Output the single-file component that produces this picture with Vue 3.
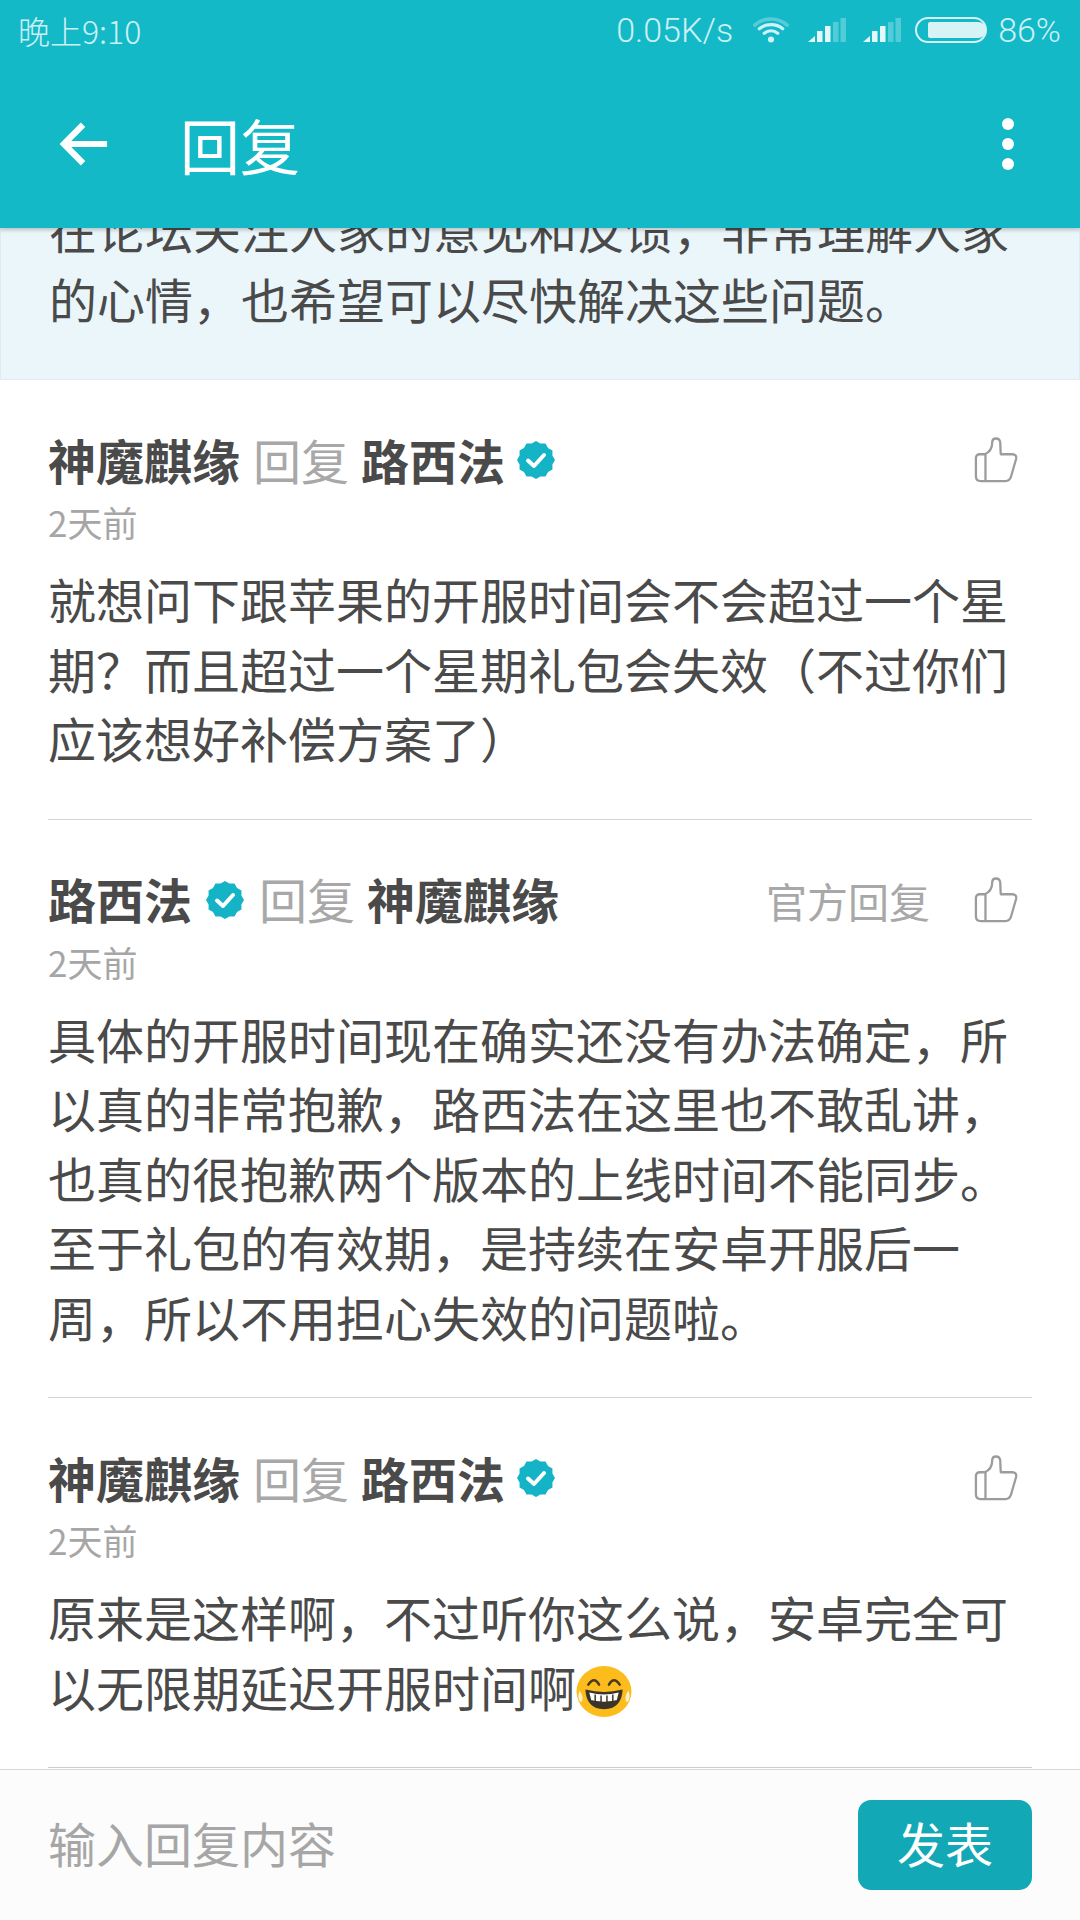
<script setup>
const comments = [
  {
    from: '神魔麒缘', fromBadge: false, to: '路西法', toBadge: true, official: false, time: '2天前',
    lines: ['就想问下跟苹果的开服时间会不会超过一个星', '期？而且超过一个星期礼包会失效（不过你们', '应该想好补偿方案了）']
  },
  {
    from: '路西法', fromBadge: true, to: '神魔麒缘', toBadge: false, official: true, time: '2天前',
    lines: ['具体的开服时间现在确实还没有办法确定，所', '以真的非常抱歉，路西法在这里也不敢乱讲，', '也真的很抱歉两个版本的上线时间不能同步。', '至于礼包的有效期，是持续在安卓开服后一', '周，所以不用担心失效的问题啦。']
  },
  {
    from: '神魔麒缘', fromBadge: false, to: '路西法', toBadge: true, official: false, time: '2天前',
    lines: ['原来是这样啊，不过听你这么说，安卓完全可', '以无限期延迟开服时间啊'], emoji: true
  }
]

const badgePoints = (() => {
  const pts = []
  for (let i = 0; i < 24; i++) {
    const r = i % 2 ? 17 : 19
    const a = (Math.PI * i) / 12 - Math.PI / 2
    pts.push(`${(19 + r * Math.cos(a)).toFixed(2)},${(19 + r * Math.sin(a)).toFixed(2)}`)
  }
  return pts.join(' ')
})()
</script>

<template>
  <div class="screen" lang="zh-CN">
    <header class="top">
      <div class="status">
        <span class="clock">晚上9:10</span>
        <div class="status-right">
          <span class="speed">0.05K/s</span>
          <svg class="wifi" width="36" height="29" viewBox="0 0 40 30" fill="none" stroke="#d0f1f5" stroke-linecap="round">
            <path d="M2 9 C12 0 28 0 38 9" stroke-width="4" opacity=".35" />
            <path d="M7 13 C14 7 26 7 33 13" stroke-width="3.6" />
            <path d="M12.5 18 C17 14.5 23 14.5 27.5 18" stroke-width="3.6" />
            <circle cx="20" cy="25" r="3.4" fill="#d0f1f5" stroke="none" />
          </svg>
          <svg v-for="n in 2" :key="n" class="signal" width="38" height="26" viewBox="0 0 38 26">
            <path d="M0 25 L7 25 L7 19 Z" fill="#e4f8fa" />
            <rect x="9" y="14" width="5.5" height="11" fill="#e4f8fa" />
            <rect x="17" y="9" width="5.5" height="16" fill="#e4f8fa" />
            <rect x="25" y="5" width="5.5" height="20" fill="#e4f8fa" opacity=".3" />
            <rect x="32.500" y="1" width="5.5" height="24" fill="#e4f8fa" opacity=".3" />
          </svg>
          <div class="battery"><div class="battery-fill"></div></div>
          <span class="percent">86%</span>
        </div>
      </div>
      <div class="bar">
        <svg class="back" width="48" height="46" viewBox="0 0 50 46" fill="none" stroke="#fff" stroke-width="6.500">
          <path d="M24 3 L4 23 L24 43" />
          <path d="M4 23 H49" />
        </svg>
        <span class="title">回复</span>
        <div class="dots"><i></i><i></i><i></i></div>
      </div>
    </header>

    <main class="list">
      <section class="notice">
        <p>在论坛关注人家的意见和反馈，非常理解人家</p>
        <p>的心情，也希望可以尽快解决这些问题。</p>
      </section>

      <article v-for="(c, i) in comments" :key="i" class="comment">
        <div class="head">
          <b class="name">{{ c.from }}</b>
          <svg v-if="c.fromBadge" class="badge" width="38" height="38" viewBox="0 0 38 38">
            <polygon :points="badgePoints" fill="#14b4c6" />
            <path d="M11 19.500 L17 25 L27 14" fill="none" stroke="#fff" stroke-width="4" stroke-linecap="round" stroke-linejoin="round" />
          </svg>
          <span class="verb">回复</span>
          <b class="name">{{ c.to }}</b>
          <svg v-if="c.toBadge" class="badge" width="38" height="38" viewBox="0 0 38 38">
            <polygon :points="badgePoints" fill="#14b4c6" />
            <path d="M11 19.500 L17 25 L27 14" fill="none" stroke="#fff" stroke-width="4" stroke-linecap="round" stroke-linejoin="round" />
          </svg>
          <span class="spacer"></span>
          <span v-if="c.official" class="official">官方回复</span>
          <svg class="thumb" width="44" height="46" viewBox="0 0 46 48" fill="none" stroke="#9c9c9c" stroke-width="2.400" stroke-linejoin="round" stroke-linecap="round">
            <path d="M11 18 H6 Q2 18 2 22 V41 Q2 46 7 46 H33 Q37 46 38.500 42 L44 23 Q45 18 40 18 H28 Q27.500 10 27.500 6 Q27 1.500 23 1.500 Q19 1.500 19 6 Q19 15 11 18 Z" />
            <path d="M12 18 V46" />
          </svg>
        </div>
        <div class="time">{{ c.time }}</div>
        <div class="body">
          <p v-for="(line, j) in c.lines" :key="j" class="line">{{ line }}<svg v-if="c.emoji && j === c.lines.length - 1" class="emoji" width="56" height="51" viewBox="0 0 56 52">
              <ellipse cx="28" cy="26" rx="28" ry="26" fill="#fcbc1c" />
              <path d="M12 19 Q18 10 23 19 M33 19 Q38 10 44 19" fill="none" stroke="#4a3a20" stroke-width="2.500" stroke-linecap="round" />
              <path d="M9 24 Q28 29 47 24 Q46 44 28 44 Q10 44 9 24 Z" fill="#3c3428" />
              <path d="M13 27 Q28 31 43 27 L41 35 Q28 38 15 35 Z" fill="#fff" />
              <path d="M19 29 V40 M25 30 V42 M31 30 V42 M37 29 V40 M15 36 Q28 39 41 36" stroke="#3c3428" stroke-width="1.500" fill="none" />
              <path d="M3 25 Q8 32 5 37 Q0 35 3 25 Z M53 25 Q48 32 51 37 Q56 35 53 25 Z" fill="#fdf3d0" />
            </svg></p>
        </div>
      </article>
    </main>

    <footer class="composer">
      <span class="placeholder">输入回复内容</span>
      <button class="send" type="button">发表</button>
    </footer>
  </div>
</template>

<style>
html, body { margin: 0; background: #fff; }
</style>

<style scoped>
.screen {
  width: 1080px;
  height: 1920px;
  display: flex;
  flex-direction: column;
  overflow: hidden;
  background: #fff;
  color: #4a4a4a;
  font-family: "Noto Sans CJK SC", "Noto Sans", sans-serif;
}
p { margin: 0; }

.top {
  flex: none;
  height: 228px;
  background: #14b9c8;
  box-shadow: 0 2px 4px rgba(0, 0, 0, .22);
  position: relative;
  z-index: 2;
}
.status {
  height: 60px;
  padding: 0 17px 0 18px;
  display: flex;
  align-items: center;
  justify-content: space-between;
  color: #cdf0f4;
  font-family: Roboto, "Noto Sans CJK SC", sans-serif;
  font-size: 34px;
  font-weight: 300;
}
.clock { font-family: "Noto Sans CJK SC", Roboto, sans-serif; font-weight: 300; font-size: 32px; }
.status-right { display: flex; align-items: center; }
.speed { margin-right: 20px; }
.wifi { margin-right: 19px; }
.signal { margin-right: 17px; }
.signal:last-of-type { margin-right: 14px; }
.battery {
  width: 72px;
  height: 26px;
  box-sizing: border-box;
  border: 2px solid #d6f3f6;
  border-radius: 13px;
  padding: 3px;
  margin-right: 11px;
  display: flex;
}
.battery-fill {
  flex: none;
  width: 58px;
  margin-left: 8px;
  background: #d6f3f6;
  border-radius: 2px 8px 8px 2px;
}
.percent { margin-right: 2px; }
.bar {
  height: 168px;
  padding: 0 66px 0 60px;
  box-sizing: border-box;
  display: flex;
  align-items: center;
  color: #fff;
}
.back { flex: none; }
.title { margin-left: 72px; font-size: 60px; line-height: 80px; font-weight: 400; }
.dots {
  margin-left: auto;
  display: flex;
  flex-direction: column;
  gap: 8px;
}
.dots i { display: block; width: 12px; height: 12px; border-radius: 50%; background: #fff; }

.list { flex: 1; min-height: 0; overflow: hidden; }
.notice {
  height: 152px;
  box-sizing: border-box;
  padding: 0 48px 46px;
  display: flex;
  flex-direction: column;
  justify-content: flex-end;
  background: #eaf6fa;
  border: 1px solid #dcecf0;
  border-top: 0;
  font-size: 48px;
  line-height: 69.500px;
  white-space: nowrap;
}
.comment {
  margin: 0 48px;
  padding: 50px 0 46px;
  border-bottom: 1px solid #d4d4d4;
}
.comment:last-child { border-bottom: 1px solid #ccc; }
.head { display: flex; align-items: center; height: 60px; font-size: 48px; line-height: 60px; white-space: nowrap; }
.name { font-weight: 700; color: #4a4a4a; padding-bottom: 3px; }
.verb { color: #a8a8a8; margin: 0 12px 0 13px; padding-bottom: 3px; }
.badge { flex: none; margin-left: 14px; }
.head .badge + .verb { margin-left: 15px; }
.head .verb + .name + .badge { margin-left: 12px; }
.spacer { flex: 1; }
.official { font-size: 41px; color: #a8a8a8; margin-right: 44px; }
.thumb { flex: none; margin-right: 14px; }
.time { margin-top: 10px; font-size: 35px; line-height: 44px; color: #a6a6a6; }
.body { margin-top: 20px; font-size: 48px; line-height: 69.500px; white-space: nowrap; }
.line { height: 69.500px; }
.emoji { vertical-align: -10px; }

.composer {
  flex: none;
  height: 151px;
  box-sizing: border-box;
  padding: 0 48px;
  background: #fcfcfc;
  border-top: 1px solid #d8d8d8;
  display: flex;
  align-items: center;
  justify-content: space-between;
  position: relative;
}
.placeholder { font-size: 48px; color: #a6a6a6; padding-bottom: 6px; }
.send {
  width: 174px;
  height: 90px;
  border: 0;
  border-radius: 13px;
  background: #12a8b6;
  color: #fff;
  font: inherit;
  font-size: 48px;
  line-height: 84px;
  padding: 0 0 6px;
}
</style>
